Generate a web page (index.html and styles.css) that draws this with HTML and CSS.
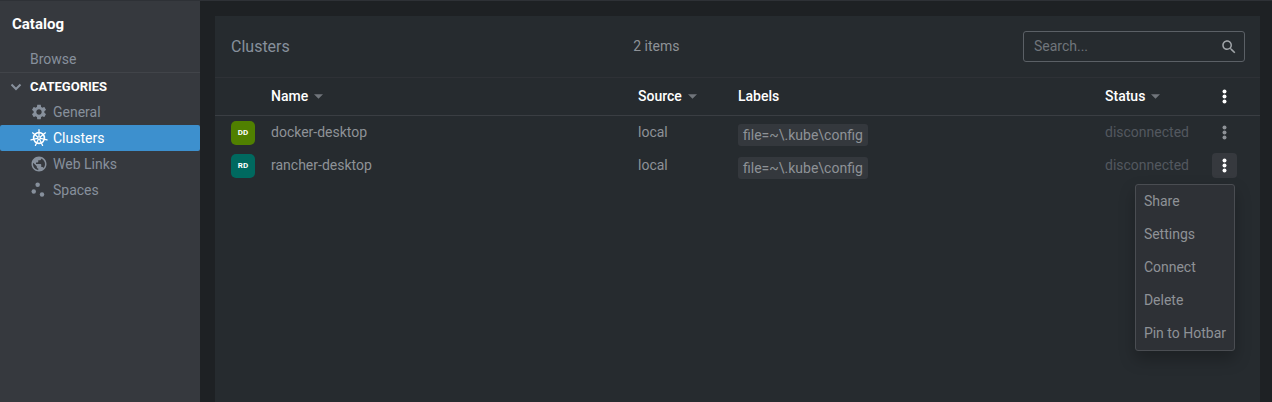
FILE: index.html
```html
<!DOCTYPE html>
<html lang="en">
<head>
<meta charset="utf-8">
<meta name="viewport" content="width=device-width, initial-scale=1">
<title>Catalog</title>
<link rel="stylesheet" href="styles.css">
</head>
<body>
<svg class="sprite" aria-hidden="true">
  <symbol id="dots" viewBox="0 0 24 24"><circle cx="12" cy="4" r="3.200"/><circle cx="12" cy="12" r="3.200"/><circle cx="12" cy="20" r="3.200"/></symbol>
  <symbol id="sort" viewBox="0 0 10 5"><path d="M0 0h10L5 5z"/></symbol>
</svg>
<div class="app">
  <aside class="sidebar">
    <h1 class="sidebar-title">Catalog</h1>
    <nav class="tree">
      <a class="browse" href="#browse">Browse</a>
      <button class="group" type="button" aria-expanded="true">
        <svg class="chevron" viewBox="0 0 12 8"><path d="M1.5 1.5 6 6l4.500-4.500"/></svg>
        <span>CATEGORIES</span>
      </button>
      <a class="item" href="#general">
        <svg class="icon" viewBox="0 0 24 24"><path d="M19.140 12.940c.04-.3.060-.61.060-.94 0-.32-.02-.64-.07-.94l2.030-1.580c.18-.14.230-.41.120-.61l-1.920-3.320c-.12-.22-.37-.29-.59-.22l-2.390.96c-.5-.38-1.030-.7-1.620-.94l-.36-2.540c-.04-.24-.24-.41-.48-.41h-3.840c-.24 0-.43.170-.47.410l-.36 2.540c-.59.240-1.130.570-1.620.940l-2.390-.96c-.22-.08-.47 0-.59.220L2.740 8.870c-.12.210-.08.470.12.610l2.030 1.580c-.05.300-.09.630-.09.940s.02.640.070.940l-2.030 1.580c-.18.140-.23.410-.12.610l1.920 3.320c.12.220.370.290.590.220l2.390-.96c.5.380 1.030.700 1.620.940l.36 2.540c.05.240.240.410.480.410h3.840c.24 0 .440-.17.470-.41l.36-2.540c.59-.24 1.130-.56 1.620-.94l2.390.96c.22.080.470 0 .590-.22l1.920-3.320c.12-.22.070-.47-.12-.61l-2.010-1.580zM12 15.600c-1.980 0-3.600-1.620-3.600-3.600s1.620-3.600 3.600-3.600 3.600 1.620 3.600 3.600-1.620 3.600-3.600 3.600z"/></svg>
        <span>General</span>
      </a>
      <a class="item active" href="#clusters" aria-current="page">
        <svg class="icon wheel" viewBox="0 0 24 24">
          <g fill="none" stroke="currentColor" stroke-linecap="round">
            <circle cx="12" cy="12" r="7.200" stroke-width="2.100"/>
            <g stroke-width="1.700">
              <path id="spoke" d="M12 9.800V1"/>
              <use href="#spoke" transform="rotate(51.430 12 12)"/>
              <use href="#spoke" transform="rotate(102.860 12 12)"/>
              <use href="#spoke" transform="rotate(154.290 12 12)"/>
              <use href="#spoke" transform="rotate(205.710 12 12)"/>
              <use href="#spoke" transform="rotate(257.140 12 12)"/>
              <use href="#spoke" transform="rotate(308.570 12 12)"/>
            </g>
            <circle cx="12" cy="12" r="1.800" stroke-width="1.400"/>
          </g>
        </svg>
        <span>Clusters</span>
      </a>
      <a class="item" href="#web-links">
        <svg class="icon" viewBox="0 0 24 24"><path d="M12 2C6.480 2 2 6.480 2 12s4.480 10 10 10 10-4.480 10-10S17.520 2 12 2zm-1 17.930c-3.950-.49-7-3.850-7-7.930 0-.62.080-1.210.210-1.790L9 15v1c0 1.100.9 2 2 2v1.930zm6.900-2.540c-.26-.81-1-1.390-1.900-1.390h-1v-3c0-.55-.45-1-1-1H8v-2h2c.55 0 1-.45 1-1V7h2c1.100 0 2-.9 2-2v-.41c2.930 1.190 5 4.060 5 7.410 0 2.080-.8 3.970-2.100 5.390z"/></svg>
        <span>Web Links</span>
      </a>
      <a class="item" href="#spaces">
        <svg class="icon" viewBox="0 0 24 24"><circle cx="10.200" cy="5" r="3"/><circle cx="5" cy="14" r="3"/><circle cx="16" cy="18" r="3"/></svg>
        <span>Spaces</span>
      </a>
    </nav>
  </aside>
  <main class="main">
    <section class="panel">
      <header class="panel-header">
        <h2 class="panel-title">Clusters</h2>
        <span class="count">2 items</span>
        <label class="search">
          <input type="search" placeholder="Search..." aria-label="Search">
          <svg class="search-icon" viewBox="0 0 24 24"><path d="M15.500 14h-.79l-.28-.27C15.410 12.590 16 11.110 16 9.500 16 5.910 13.090 3 9.500 3S3 5.910 3 9.500 5.910 16 9.500 16c1.610 0 3.090-.59 4.230-1.570l.27.280v.79l5 4.990L20.490 19l-4.990-5zm-6 0C7.010 14 5 11.990 5 9.500S7.010 5 9.500 5 14 7.010 14 9.500 11.990 14 9.500 14z"/></svg>
        </label>
      </header>
      <table class="table">
        <colgroup><col class="col-avatar"><col><col class="col-short"><col><col class="col-short"><col class="col-menu"></colgroup>
        <thead>
          <tr>
            <th></th>
            <th scope="col"><button class="sort" type="button">Name<svg class="arrow"><use href="#sort"/></svg></button></th>
            <th scope="col"><button class="sort" type="button">Source<svg class="arrow"><use href="#sort"/></svg></button></th>
            <th scope="col">Labels</th>
            <th scope="col"><button class="sort" type="button">Status<svg class="arrow"><use href="#sort"/></svg></button></th>
            <th class="menu-cell"><button class="more bright" type="button" aria-label="Columns"><svg class="dots"><use href="#dots"/></svg></button></th>
          </tr>
        </thead>
        <tbody>
          <tr>
            <td class="avatar-cell"><span class="avatar green">DD</span></td>
            <td>docker-desktop</td>
            <td>local</td>
            <td class="label-cell"><span class="badge">file=~\.kube\config</span></td>
            <td class="status">disconnected</td>
            <td class="menu-cell"><button class="more" type="button" aria-label="docker-desktop actions"><svg class="dots"><use href="#dots"/></svg></button></td>
          </tr>
          <tr>
            <td class="avatar-cell"><span class="avatar teal">RD</span></td>
            <td>rancher-desktop</td>
            <td>local</td>
            <td class="label-cell"><span class="badge">file=~\.kube\config</span></td>
            <td class="status">disconnected</td>
            <td class="menu-cell">
              <button class="more bright open" type="button" aria-expanded="true" aria-label="rancher-desktop actions"><svg class="dots"><use href="#dots"/></svg></button>
              <div class="menu" role="menu">
                <button type="button" role="menuitem">Share</button>
                <button type="button" role="menuitem">Settings</button>
                <button type="button" role="menuitem">Connect</button>
                <button type="button" role="menuitem">Delete</button>
                <button type="button" role="menuitem">Pin to Hotbar</button>
              </div>
            </td>
          </tr>
        </tbody>
      </table>
    </section>
  </main>
</div>
</body>
</html>
```
FILE: styles.css
```css
* { box-sizing: border-box; }

body {
  margin: 0;
  background: #1e2124;
  color: #8e9297;
  font: 14px/20px Roboto, "Liberation Sans", sans-serif;
}

button, input { font: inherit; color: inherit; }

button {
  border: 0;
  padding: 0;
  background: none;
  cursor: pointer;
}

svg { fill: currentColor; flex: none; }

.sprite { position: absolute; width: 0; height: 0; }

.app {
  display: flex;
  min-height: 100vh;
  border-top: 1px solid #2e3136;
}

/* Sidebar */
.sidebar {
  flex: 0 0 200px;
  background: #36393e;
  color: #87909c;
}

.sidebar-title {
  margin: 0;
  padding: 13px 12px 12px;
  color: #fff;
  font-size: 15px;
  line-height: 20px;
  font-weight: 700;
}

.tree { display: flex; flex-direction: column; }

.browse, .item {
  height: 26px;
  line-height: 26px;
  padding-left: 30px;
  color: inherit;
  text-decoration: none;
}

.tree .browse { height: 27px; border-bottom: 1px solid #414449; }

.group {
  display: flex;
  align-items: center;
  gap: 8px;
  height: 26px;
  padding: 2px 0 0 10px;
  color: #fff;
  font-size: 13px;
  font-weight: 700;
}

.chevron {
  width: 12px;
  height: 8px;
  fill: none;
  stroke: #87909c;
  stroke-width: 2;
}

.item {
  display: flex;
  align-items: center;
  gap: 5px;
}

.item.active {
  background: #3d90ce;
  color: #fff;
  border-radius: 2px;
}

.icon { width: 18px; height: 18px; overflow: visible; }

/* Main panel */
.main {
  flex: 1;
  min-width: 0;
  display: flex;
  padding: 15px 12px 0 15px;
}

.panel { flex: 1; min-width: 0; background: #262b2f; }

.panel-header {
  display: flex;
  justify-content: space-between;
  align-items: center;
  padding: 15px 15px 15px 16px;
  border-bottom: 1px solid #2e3136;
}

.panel-title {
  margin: 0;
  color: #87909c;
  font-size: 16px;
  font-weight: 400;
}

.count { padding-bottom: 2px; }

.search {
  display: flex;
  align-items: center;
  width: 222px;
  height: 31px;
  padding: 0 6px 0 10px;
  border: 1px solid #5b6066;
  border-radius: 3px;
}

.search input {
  flex: 1;
  min-width: 0;
  border: 0;
  padding: 0 0 2px;
  outline: 0;
  background: none;
}

.search input::placeholder { color: #70757b; opacity: 1; }

.search-icon { width: 18px; height: 18px; color: #a0a4a8; }

.table {
  width: 100%;
  table-layout: fixed;
  border-collapse: separate;
  border-spacing: 0;
}

.col-avatar { width: 48px; }
.col-short { width: 100px; }
.col-menu { width: 63px; }

.table th {
  height: 38px;
  padding: 0 8px 2px;
  border-bottom: 1px solid #3a3e43;
  color: #fff;
  font-weight: 500;
  text-align: left;
}

.table td {
  height: 33px;
  padding: 0 8px 2px;
}

.sort { display: flex; align-items: center; gap: 6px; }
.arrow { width: 9px; height: 5px; margin-top: 2px; color: #70757b; }

.table .avatar-cell { padding: 0 8px 0 16px; }

.avatar {
  display: block;
  width: 24px;
  height: 24px;
  border-radius: 5px;
  color: #fff;
  font-size: 8px;
  line-height: 24px;
  font-weight: 700;
  text-align: center;
}

.green { background: #508000; }
.teal { background: #00695f; }

.table .label-cell { padding: 5px 8px 0; }

.badge {
  display: block;
  width: fit-content;
  padding: 1px 5px;
  border-radius: 3px;
  background: #34383d;
}

.status { color: #53585f; }

.table .menu-cell {
  position: relative;
  padding: 0 23px 0 15px;
}

.more {
  display: grid;
  place-items: center;
  width: 25px;
  height: 25px;
  border-radius: 4px;
}

.dots { width: 15px; height: 15px; }
.bright { color: #fff; }
.open { background: #36393e; }

.menu {
  position: absolute;
  top: 100%;
  right: 25px;
  z-index: 1;
  display: flex;
  flex-direction: column;
  margin-top: 2px;
  border: 1px solid #4a4d52;
  border-radius: 3px;
  background: #2e3136;
  box-shadow: 0 8px 16px rgba(0, 0, 0, .25);
}

.menu button {
  height: 33px;
  padding: 0 8px 2px;
  text-align: left;
  white-space: nowrap;
}
```
